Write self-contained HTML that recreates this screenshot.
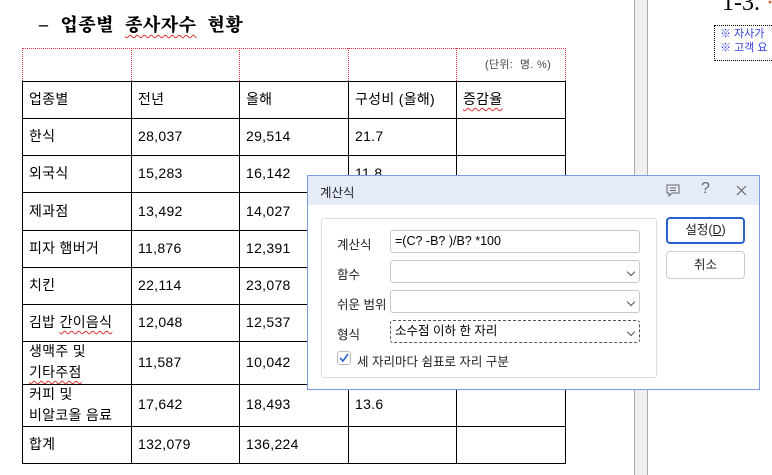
<!DOCTYPE html>
<html><head><meta charset="utf-8"><style>
*{margin:0;padding:0;box-sizing:border-box}
body{width:772px;height:475px;overflow:hidden;background:#fff;position:relative;font-family:"Liberation Sans","Noto Sans CJK KR",sans-serif;font-size:14px;color:#000}
.a{position:absolute}
.h{position:absolute;height:0;border-top:1px solid #000}
.v{position:absolute;width:0;border-left:1px solid #000}
.dh{position:absolute;height:0;border-top:1px dotted #e0303a}
.dv{position:absolute;width:0;border-left:1px dotted #e0303a}
.t{position:absolute;font-size:14px;white-space:nowrap;line-height:19px;letter-spacing:0.3px}
.w{text-decoration:underline wavy #e03030;text-decoration-thickness:1px;text-underline-offset:3px}
.dlg{font-size:12.5px;color:#222}
.in{position:absolute;left:390px;width:250px;height:23px;border:1px solid #c8c8c8;border-radius:3px;background:#fff;font-size:12.5px;line-height:21px;padding-left:4px}
.chev{position:absolute;right:5px;top:8px;width:6px;height:6px;border-right:1px solid #555;border-bottom:1px solid #555;transform:rotate(45deg)}
</style></head><body>
<div class="a" style="left:38px;top:11px;font-size:18px;font-weight:900;font-family:'Noto Serif CJK SC','Liberation Serif',serif;white-space:nowrap;letter-spacing:0.5px;word-spacing:6px">– 업종별 <span class="w">종사자수</span> 현황</div>
<!-- dotted top row -->
<div class="dh" style="left:22px;top:48px;width:544px"></div>
<div class="dv" style="left:22px;top:48px;height:33px"></div>
<div class="dv" style="left:131px;top:48px;height:33px"></div>
<div class="dv" style="left:239px;top:48px;height:33px"></div>
<div class="dv" style="left:348px;top:48px;height:33px"></div>
<div class="dv" style="left:456px;top:48px;height:33px"></div>
<div class="dv" style="left:565px;top:48px;height:33px"></div>
<div class="t" style="left:485px;top:56px;font-size:11px;color:#444">(단위:&nbsp; 명. %)</div>
<!-- grid -->
<div class="h" style="left:22px;top:81px;width:544px"></div>
<div class="h" style="left:22px;top:118px;width:544px"></div>
<div class="h" style="left:22px;top:155px;width:544px"></div>
<div class="h" style="left:22px;top:192px;width:544px"></div>
<div class="h" style="left:22px;top:230px;width:544px"></div>
<div class="h" style="left:22px;top:267px;width:544px"></div>
<div class="h" style="left:22px;top:304px;width:544px"></div>
<div class="h" style="left:22px;top:341px;width:544px"></div>
<div class="h" style="left:22px;top:384px;width:544px"></div>
<div class="h" style="left:22px;top:426px;width:544px"></div>
<div class="h" style="left:22px;top:463px;width:544px"></div>
<div class="v" style="left:22px;top:81px;height:383px"></div>
<div class="v" style="left:131px;top:81px;height:383px"></div>
<div class="v" style="left:239px;top:81px;height:383px"></div>
<div class="v" style="left:348px;top:81px;height:383px"></div>
<div class="v" style="left:456px;top:81px;height:383px"></div>
<div class="v" style="left:565px;top:81px;height:383px"></div>
<div class="t" style="left:29px;top:90px">업종별</div><div class="t" style="left:138px;top:90px">전년</div><div class="t" style="left:246px;top:90px">올해</div><div class="t" style="left:355px;top:90px">구성비 (올해)</div><div class="t" style="left:463px;top:90px"><span class="w">증감율</span></div>
<div class="t" style="left:29px;top:127px">한식</div><div class="t" style="left:138px;top:127px">28,037</div><div class="t" style="left:246px;top:127px">29,514</div><div class="t" style="left:355px;top:127px">21.7</div>
<div class="t" style="left:29px;top:164px">외국식</div><div class="t" style="left:138px;top:164px">15,283</div><div class="t" style="left:246px;top:164px">16,142</div><div class="t" style="left:355px;top:164px">11.8</div>
<div class="t" style="left:29px;top:202px">제과점</div><div class="t" style="left:138px;top:202px">13,492</div><div class="t" style="left:246px;top:202px">14,027</div>
<div class="t" style="left:29px;top:239px">피자 햄버거</div><div class="t" style="left:138px;top:239px">11,876</div><div class="t" style="left:246px;top:239px">12,391</div>
<div class="t" style="left:29px;top:276px">치킨</div><div class="t" style="left:138px;top:276px">22,114</div><div class="t" style="left:246px;top:276px">23,078</div>
<div class="t" style="left:29px;top:313px">김밥 <span class="w">간이음식</span></div><div class="t" style="left:138px;top:313px">12,048</div><div class="t" style="left:246px;top:313px">12,537</div>
<div class="t" style="left:29px;top:342px">생맥주 및</div><div class="t" style="left:29px;top:363px"><span class="w">기타주점</span></div><div class="t" style="left:138px;top:353px">11,587</div><div class="t" style="left:246px;top:353px">10,042</div>
<div class="t" style="left:29px;top:385px">커피 및</div><div class="t" style="left:29px;top:406px">비알코올 음료</div><div class="t" style="left:138px;top:395px">17,642</div><div class="t" style="left:246px;top:395px">18,493</div><div class="t" style="left:355px;top:395px">13.6</div>
<div class="t" style="left:29px;top:435px">합계</div><div class="t" style="left:138px;top:435px">132,079</div><div class="t" style="left:246px;top:435px">136,224</div>
<!-- right side -->
<div class="a" style="left:634px;top:0;width:14px;height:475px;background:#f0f0f0;border-left:1px solid #aaa;border-right:1px solid #aaa"></div>
<div class="a" style="left:722px;top:-10px;font-family:'Liberation Serif',serif;font-size:24px;white-space:nowrap">1-3. <span style="color:#e06030">·</span></div>
<div class="a" style="left:714px;top:25px;width:70px;height:36px;border:1px dotted #000"></div>
<div class="a" style="left:720px;top:27px;font-size:11px;color:#3040e0;line-height:14px;white-space:nowrap">※ 자사가<br>※ 고객 요</div>
<!-- dialog -->
<div class="a dlg" style="left:307px;top:175px;width:453px;height:215px;background:#fff;border:1px solid #7a9de0">
<div class="a" style="left:0;top:0;width:451px;height:29px;background:#e5ecf9"></div>
<div class="a" style="left:12px;top:6px;font-size:12.5px">계산식</div>
<svg class="a" style="left:358px;top:8px" width="14" height="13" viewBox="0 0 14 13"><path d="M1 1h12v8H6l-3 3V9H1z" fill="none" stroke="#666"/><path d="M4 4h6M4 6.5h6" stroke="#666"/></svg>
<div class="a" style="left:393px;top:4px;font-size:16px;color:#666">?</div>
<svg class="a" style="left:428px;top:9px" width="11" height="11"><path d="M1 1l9 9M10 1l-9 9" stroke="#666" stroke-width="1.2"/></svg>
<div class="a" style="left:13px;top:42px;width:336px;height:160px;border:1px solid #ddd;border-radius:3px"></div>
</div>
<div class="a dlg" style="left:337px;top:234px">계산식</div>
<div class="a dlg" style="left:337px;top:264px">함수</div>
<div class="a dlg" style="left:337px;top:294px">쉬운 범위</div>
<div class="a dlg" style="left:337px;top:324px">형식</div>
<div class="in" style="top:230px">=(C? -B? )/B? *100</div>
<div class="in" style="top:260px"><span class="chev"></span></div>
<div class="in" style="top:290px"><span class="chev"></span></div>
<div class="in" style="top:320px;border:1px dashed #555">소수점 이하 한 자리<span class="chev"></span></div>
<div class="a" style="left:337px;top:351px;width:14px;height:14px;border:1px solid #bbb;border-radius:3px;background:#fff"></div>
<svg class="a" style="left:338px;top:352px" width="12" height="12"><path d="M2 6l3 3 5-7" fill="none" stroke="#2a62d0" stroke-width="1.6"/></svg>
<div class="a dlg" style="left:357px;top:351px">세 자리마다 쉼표로 자리 구분</div>
<div class="a dlg" style="left:666px;top:217px;width:79px;height:27px;border:2px solid #2a62d0;border-radius:4px;text-align:center;line-height:23px">설정(<u>D</u>)</div>
<div class="a dlg" style="left:666px;top:251px;width:79px;height:28px;border:1px solid #ccc;border-radius:4px;text-align:center;line-height:26px">취소</div>
</body></html>
